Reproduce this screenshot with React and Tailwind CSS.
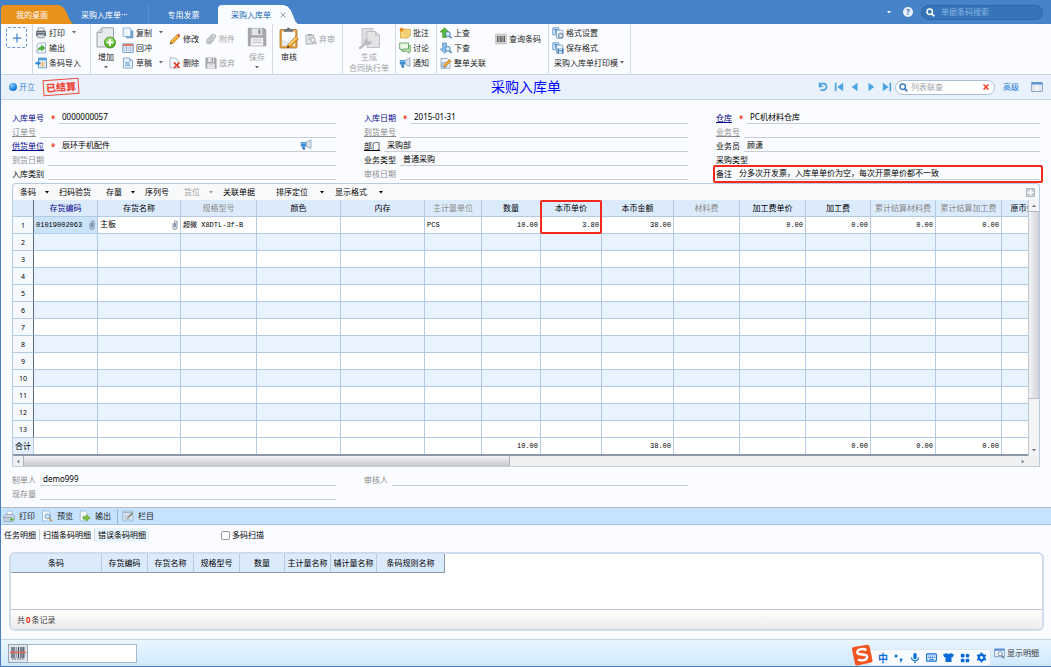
import { useState } from 'react';

const COLUMNS = [
    { key: 'code', label: '存货编码', width: 'w-[64px]', tone: 'text-[#00008b]' },
    { key: 'name', label: '存货名称', width: 'w-[83px]' },
    { key: 'spec', label: '规格型号', width: 'w-[76px]', tone: 'text-[#8a8a8a]' },
    { key: 'color', label: '颜色', width: 'w-[84px]' },
    { key: 'memory', label: '内存', width: 'w-[84px]' },
    { key: 'unit', label: '主计量单位', width: 'w-[57px]', tone: 'text-[#8a8a8a]' },
    { key: 'qty', label: '数量', width: 'w-[59px]', numeric: true },
    { key: 'price', label: '本币单价', width: 'w-[61px]', numeric: true, marked: true },
    { key: 'amount', label: '本币金额', width: 'w-[72px]', numeric: true },
    { key: 'material', label: '材料费', width: 'w-[66px]', numeric: true, tone: 'text-[#8a8a8a]' },
    { key: 'procPrice', label: '加工费单价', width: 'w-[66px]', numeric: true },
    { key: 'proc', label: '加工费', width: 'w-[65px]', numeric: true },
    { key: 'sumMaterial', label: '累计结算材料费', width: 'w-[65px]', numeric: true, tone: 'text-[#8a8a8a]' },
    { key: 'sumProc', label: '累计结算加工费', width: 'w-[66px]', numeric: true, tone: 'text-[#8a8a8a]' },
    { key: 'origin', label: '原币金额', width: 'w-[50px]', numeric: true },
];

const FIRST_ROW = {
    code: '01019002063',
    name: '主板',
    spec: '超微 X8DTL-3f-B',
    unit: 'PCS',
    qty: '10.00',
    price: '3.80',
    amount: '38.00',
    procPrice: '0.00',
    proc: '0.00',
    sumMaterial: '0.00',
    sumProc: '0.00',
};

const ROWS = Array.from({ length: 13 }, (_, i) => (i === 0 ? FIRST_ROW : {}));

const TOTALS = { qty: '10.00', amount: '38.00', proc: '0.00', sumMaterial: '0.00', sumProc: '0.00' };

const FIELDS = [
    [
        { id: 'no', label: '入库单号', tone: 'text-[#00008b]', required: true, value: '0000000057' },
        { id: 'order', label: '订单号', tone: 'text-[#8a8a8a] underline', value: '' },
        { id: 'vendor', label: '供货单位', tone: 'text-[#00008b] underline', required: true, value: '辰环手机配件', horn: true },
        { id: 'arrive', label: '到货日期', tone: 'text-[#8a8a8a]', value: '' },
        { id: 'kind', label: '入库类别', tone: 'text-black', value: '' },
    ],
    [
        { id: 'date', label: '入库日期', tone: 'text-[#00008b]', required: true, value: '2015-01-31' },
        { id: 'arriveNo', label: '到货单号', tone: 'text-[#8a8a8a] underline', value: '' },
        { id: 'dept', label: '部门', tone: 'text-black underline', value: '采购部' },
        { id: 'biz', label: '业务类型', tone: 'text-black', value: '普通采购' },
        { id: 'audit', label: '审核日期', tone: 'text-[#8a8a8a]', value: '' },
    ],
    [
        { id: 'store', label: '仓库', tone: 'text-[#00008b] underline', required: true, value: 'PC机材料仓库' },
        { id: 'bizNo', label: '业务号', tone: 'text-[#8a8a8a] underline', value: '' },
        { id: 'clerk', label: '业务员', tone: 'text-black', value: '顾潇' },
        { id: 'buyType', label: '采购类型', tone: 'text-black', value: '' },
        { id: 'memo', label: '备注', tone: 'text-black', value: '分多次开发票，入库单单价为空，每次开票单价都不一致', marked: true },
    ],
];

const GRID_TOOLS = [
    { label: '条码', caret: true },
    { label: '扫码验货' },
    { label: '存量', caret: true },
    { label: '序列号' },
    { label: '货位', caret: true, disabled: true },
    { label: '关联单据' },
];

const VIEW_TOOLS = ['排序定位', '显示格式'];

const SCAN_COLUMNS = [
    { label: '条码', width: 'w-[91px]' },
    { label: '存货编码', width: 'w-[46px]' },
    { label: '存货名称', width: 'w-[46px]' },
    { label: '规格型号', width: 'w-[46px]' },
    { label: '数量', width: 'w-[45px]' },
    { label: '主计量名称', width: 'w-[46px]' },
    { label: '辅计量名称', width: 'w-[46px]' },
    { label: '条码规则名称', width: 'w-[68px]' },
];

/* ---------- icons ---------- */

function Icon({ children, className = 'size-3' }) {
    return (
        <svg viewBox="0 0 12 12" className={`shrink-0 ${className}`} fill="none" aria-hidden="true">
            {children}
        </svg>
    );
}

const Caret = ({ className = 'text-[#666]' }) => (
    <svg viewBox="0 0 4 3" className={`w-1 h-[3px] shrink-0 ${className}`} fill="currentColor" aria-hidden="true">
        <path d="M0 0h4L2 2.6z" />
    </svg>
);

const PrinterIcon = () => (
    <Icon>
        <path d="M3 1h6v3H3z" fill="#fff" stroke="#6b7280" strokeWidth=".7" />
        <path d="M1 4.500Q1 3.700 2 3.700h8q1 0 1 .8V9H1z" fill="#5f6b78" />
        <path d="M1.500 5.600h9" stroke="#a9b4c2" />
        <path d="M2.800 7.300h6.400v3.500H2.800z" fill="#eef2f6" stroke="#6b7280" strokeWidth=".7" />
        <path d="M4 9h4" stroke="#8d97a3" strokeWidth=".6" />
    </Icon>
);

const ExportIcon = () => (
    <Icon>
        <path d="M2 2.800L4 1h6.500v10H2z" fill="#f3f8fd" stroke="#8ea6bf" strokeWidth=".8" />
        <path d="M3 8.500Q3.200 5 6.300 4.900V3l3.800 3.100-3.800 3V7.200Q4.500 7 3 8.500z" fill="#4db32f" stroke="#2f8a1c" strokeWidth=".4" />
    </Icon>
);

const ImportIcon = () => (
    <Icon>
        <path d="M3.500 1h8v9.800h-8z" fill="#eaf4fd" stroke="#4486c4" strokeWidth=".8" />
        <path d="M3.500 1.300h8v2h-8z" fill="#4a98dc" />
        <path d="M5 5.300h5.500M5 7h5.500M5 8.700h5.500M7.500 4v6.500" stroke="#e0a54a" strokeWidth=".6" />
        <path d="M.3 5.200h2.500V3.600L6 6.200 2.800 8.800V7.200H.3z" fill="#2f86d1" />
    </Icon>
);

const CopyIcon = () => (
    <Icon>
        <path d="M4 3.500h7.300v7.800H4z" fill="#6f9fce" />
        <path d="M1.200 1h7.500v8.500H1.200z" fill="#eef6fe" stroke="#7ba4cd" strokeWidth=".8" />
    </Icon>
);

const FlushIcon = () => (
    <Icon>
        <path d="M.7 1.800h10.600v8.700H.7z" fill="#dbe9f8" stroke="#6d93bd" strokeWidth=".8" />
        <path d="M1 2.200h10v1.800H1z" fill="#e2705f" />
        <path d="M1 6h10M1 8.200h10M4.500 4v6.300M8 4v6.300" stroke="#9db9d8" strokeWidth=".6" />
    </Icon>
);

const DraftIcon = () => (
    <Icon>
        <path d="M1.500 1h6L10.500 4v7h-9z" fill="#eaf3fd" stroke="#6f97c2" strokeWidth=".8" />
        <path d="M7.500 1v3h3" fill="#b7d2ee" stroke="#6f97c2" strokeWidth=".6" />
        <path d="M3.200 5.500h4M3.200 7h5M3.200 8.500h5" stroke="#4b86c4" strokeWidth=".7" />
    </Icon>
);

const PencilIcon = () => (
    <Icon>
        <path d="M1.800 7.800L8 1.800l2.300 2.300-6.200 6.100-2.900.9z" fill="#f6a623" stroke="#8d5a14" strokeWidth=".5" />
        <path d="M2.600 8.500l6.200-6" stroke="#ffd98a" strokeWidth=".9" />
        <path d="M8 1.800l1-.9q.8-.3 1.600.5t.5 1.700l-.8 1z" fill="#d9573f" />
        <path d="M1.200 11.100l.4-1.900 1.400 1.400z" fill="#333" />
    </Icon>
);

const DeleteIcon = () => (
    <Icon>
        <path d="M1 1h5.500L9 3.500V11H1z" fill="#f4f7fa" stroke="#8b9bad" strokeWidth=".7" />
        <path d="M5 5.500l5.500 5.500M10.500 5.500L5 11" stroke="#df3320" strokeWidth="1.700" />
    </Icon>
);

const ClipIcon = () => (
    <Icon>
        <path d="M8.300 3.300L4.200 7.600q-.6 1 .2 1.400t1.300-.3l4.200-4.200q1-1.400-.1-2.500t-2.500-.1L2.400 6.700Q1 8.600 2.300 9.900t3.100.2l3-2.900" stroke="#b5b8bc" strokeWidth="1.500" />
    </Icon>
);

// The upright clip shown at the end of a reference cell
const CellClip = () => (
    <svg viewBox="0 0 6 10" className="w-[6px] h-[10px] shrink-0" fill="none" aria-hidden="true">
        <path d="M1 3.200v4.300q0 1.900 2 1.900t2-1.900V2.200Q5 .7 3.700.7T2.400 2.200v4.500q0 .6.600.6t.600-.6V3" stroke="#6f7f92" strokeWidth=".9" />
    </svg>
);

const GrayDiskIcon = ({ className }) => (
    <Icon className={className}>
        <path d="M.8.8h9.500l1 1v9.500H.8z" fill="#a6a8ac" stroke="#8d8f93" strokeWidth=".4" />
        <path d="M2.800.9h6.300v4H2.800z" fill="#e4e5e7" />
        <path d="M6.800 1.400h1.300v2.800H6.800z" fill="#8d8f93" />
        <path d="M2.300 6.500h7.400v4.700H2.300z" fill="#f1f1f2" />
        <path d="M3.200 7.800h5.600M3.200 9.300h5.600" stroke="#b5b7ba" strokeWidth=".5" />
    </Icon>
);

const AddDocIcon = () => (
    <svg viewBox="0 0 20 22" className="w-5 h-[22px]" fill="none" aria-hidden="true">
        <path d="M1 5.500L6 .8h11.500V20H1z" fill="#e9ecee" stroke="#98a0a8" />
        <path d="M1 5.500h5V.8" fill="#d3d8dd" stroke="#98a0a8" strokeWidth=".8" />
        <circle cx="14" cy="15.500" r="5.500" fill="#5cb82c" stroke="#3c8d16" strokeWidth=".8" />
        <path d="M9.500 14.500q1-4 4.500-4t4.500 4z" fill="#95da66" />
        <path d="M14 12v7M10.500 15.500h7" stroke="#fff" strokeWidth="2" />
    </svg>
);

const AuditIcon = () => (
    <svg viewBox="0 0 20 22" className="w-5 h-[22px]" fill="none" aria-hidden="true">
        <rect x="1" y="2.500" width="17" height="18.500" rx="1" fill="#e5a64d" stroke="#a8712a" strokeWidth=".8" />
        <path d="M3 4.500h13v14.500H3z" fill="#fbfcfd" />
        <path d="M5 4.800V3q0-.8 1-.8h1.500Q8 .5 9.500.5T11.500 2.200H13q1 0 1 .8v1.800z" fill="#6d757e" />
        <path d="M3 12l13 7H3z" fill="#e3e7eb" />
        <path d="M9 17.500l7.500-8 2.800 2.600-7.500 7.600-3.600 1z" fill="#f6a623" stroke="#8d5a14" strokeWidth=".6" />
        <path d="M10 18l7.500-7.500" stroke="#ffdc94" strokeWidth="1.100" />
        <path d="M8.200 20.700l.6-2.100 1.500 1.500z" fill="#222" />
    </svg>
);

const UnauditIcon = () => (
    <Icon>
        <path d="M1 2h7.500v9H1z" fill="#e6e7e9" stroke="#a5a8ac" strokeWidth=".9" />
        <path d="M3 1h3.500v1.800H3z" fill="#a5a8ac" />
        <path d="M3 4.800h3.500M3 6.500h2" stroke="#a5a8ac" strokeWidth=".7" />
        <circle cx="8" cy="7" r="2.300" fill="#f2f2f3" stroke="#a5a8ac" />
        <path d="M9.500 8.700L11.500 11" stroke="#a5a8ac" strokeWidth="1.300" />
    </Icon>
);

const GenerateIcon = () => (
    <svg viewBox="0 0 24 24" className="size-6" fill="none" aria-hidden="true">
        <path d="M5 1.500h11V17H5z" fill="#dcdddf" stroke="#c3c5c8" />
        <path d="M10 4.500h8.500L22.500 8v12.500H10z" fill="#e3e4e6" stroke="#bfc1c4" />
        <path d="M18.500 4.500V8h4" stroke="#bfc1c4" fill="#cfd1d3" />
        <path d="M3 21l5.500-4.500" stroke="#b9bbbe" strokeWidth="2.400" strokeLinecap="round" />
        <path d="M7.500 16q-1-3.500 2.500-5l.3 2.600 2 1.200 2.200-1.300q.6 4-3.400 4.400z" fill="#b9bbbe" />
    </svg>
);

const NoteIcon = () => (
    <Icon>
        <path d="M1.500 2.300h9.800v6l-2.600 2.700H1.500z" fill="#f7d77c" stroke="#c89a3a" strokeWidth=".7" />
        <path d="M11.300 8.300H8.700V11z" fill="#fff1c4" stroke="#c89a3a" strokeWidth=".5" />
        <circle cx="2.600" cy="2.800" r="2" fill="#ee8a1d" />
        <path d="M4.500 5h4.800M4 7h4" stroke="#d8ac4f" strokeWidth=".6" />
    </Icon>
);

const ChatIcon = () => (
    <Icon>
        <path d="M3.500 3.500h8v6H10v2L8 9.500H3.500z" fill="#bfe0b4" stroke="#5b9f55" strokeWidth=".7" />
        <path d="M.7 1h8.800v6H4.200L2.300 9V7H.7z" fill="#e9f7e4" stroke="#4f9a53" strokeWidth=".8" />
    </Icon>
);

const HornIcon = () => (
    <Icon>
        <path d="M.8 3h5.500v4.500H.8z" fill="#3f8fd8" />
        <path d="M6.300 3L11 .9v8.600L6.300 7.500z" fill="#d8e3ee" stroke="#7e95ad" strokeWidth=".7" />
        <path d="M2 7.500h2.600l.6 3.300H3z" fill="#2f74b8" />
        <path d="M1 4.200h5" stroke="#9acbf3" strokeWidth=".8" />
    </Icon>
);

const LookUpIcon = () => (
    <Icon>
        <path d="M4.500.7L9 5H6.400v5.500H2.600V5H0z" fill="#5bb834" stroke="#2f8420" strokeWidth=".5" />
        <circle cx="7.800" cy="7" r="2.400" fill="#d6ebfc" stroke="#3b7cc0" strokeWidth=".9" />
        <path d="M9.500 8.900l2 2.300" stroke="#3b6fa8" strokeWidth="1.300" />
    </Icon>
);

const LookDownIcon = () => (
    <Icon>
        <path d="M4.500 11.200L.3 7h2.300V1h3.800v6H9z" fill="#8fc0ec" stroke="#3777b9" strokeWidth=".6" />
        <circle cx="7.800" cy="6.800" r="2.400" fill="#d6ebfc" stroke="#3b7cc0" strokeWidth=".9" />
        <path d="M9.500 8.700l2 2.300" stroke="#3b6fa8" strokeWidth="1.300" />
    </Icon>
);

const LinkDocIcon = () => (
    <Icon>
        <path d="M1 1.500h6.500L10 4v7.300H1z" fill="#eef3f8" stroke="#7b93ac" strokeWidth=".7" />
        <circle cx="4.300" cy="8" r="2.500" stroke="#5588bd" strokeWidth=".8" />
        <path d="M4 7.500l5.500-5 1.700 1.700-5.300 5-2.300.5z" fill="#f0a42c" stroke="#8d5a14" strokeWidth=".4" />
    </Icon>
);

const BarcodeIcon = () => (
    <Icon>
        <path d="M.5 1h11v10H.5z" fill="#cfcfcf" stroke="#b5b5b5" strokeWidth=".5" />
        <path d="M2.500 3v6M4 3v6M8 3v6M9.500 3v6" stroke="#444" strokeWidth=".8" />
        <path d="M6 3v6" stroke="#444" strokeWidth="1.200" />
    </Icon>
);

const FormatIcon = ({ save }) => (
    <Icon>
        <path d="M.8.8h6v7h-6z" fill="#dcebfa" stroke="#4f86be" strokeWidth=".8" />
        <path d="M2.200 2.700h3.200M3.800 2.700v4" stroke="#2c6cad" strokeWidth=".9" />
        <path d="M4.500 3.200h6.300v8H4.500z" fill="#f1f7fd" stroke="#5f8fc0" strokeWidth=".7" />
        {save ? (
            <>
                <path d="M5.500 6.500h6v5h-6z" fill="#3f77b5" />
                <path d="M7 6.700h3v1.600H7zM7 9.300h3v2H7z" fill="#e6f0fa" />
            </>
        ) : (
            <>
                <circle cx="8.700" cy="8.700" r="2.500" fill="#b9c9da" stroke="#5b7a9b" strokeWidth=".8" />
                <circle cx="8.700" cy="8.700" r=".8" fill="#fff" />
            </>
        )}
    </Icon>
);

const SearchIcon = ({ className }) => (
    <Icon className={className}>
        <circle cx="5" cy="5" r="3.600" stroke="currentColor" strokeWidth="2" />
        <path d="M7.500 7.500L11 11" stroke="currentColor" strokeWidth="2.400" />
    </Icon>
);

const PreviewIcon = () => (
    <Icon>
        <path d="M1.500 1h5.500L9.500 3.500V11h-8z" fill="#f2f7fc" stroke="#8ca7c3" strokeWidth=".7" />
        <circle cx="6.500" cy="6.300" r="2.400" fill="#cfe6fa" stroke="#5f93c4" strokeWidth=".9" />
        <path d="M8.300 8.200l2.700 3" stroke="#c98b3c" strokeWidth="1.300" />
    </Icon>
);

const PageOutIcon = () => (
    <Icon>
        <path d="M1.200 1h5l2.500 2.500V11H1.200z" fill="#f2f7fc" stroke="#8ca7c3" strokeWidth=".7" />
        <path d="M4 6.500h3V4.700l4.300 3.200L7 11V9.200H4z" fill="#7fc144" stroke="#4d9423" strokeWidth=".5" />
    </Icon>
);

const LightPrinterIcon = () => (
    <Icon>
        <path d="M3.500 4.500L5 .9l4.500.6-1 3.500z" fill="#fff" stroke="#93a5b8" strokeWidth=".6" />
        <path d="M.7 6.500L3 4.300h7l1.300 2v4l-2 1.200H1.200z" fill="#c9d4e0" stroke="#7d8fa3" strokeWidth=".6" />
        <path d="M1 7.800h8" stroke="#8496aa" strokeWidth=".8" />
        <path d="M7 8.500h3.500v2H7z" fill="#55b43a" />
    </Icon>
);

const ColumnsIcon = () => (
    <Icon>
        <path d="M.8 1h9.900v10H.8z" fill="#dce7f2" stroke="#8ea8c4" strokeWidth=".7" />
        <path d="M1.200 2.500h9" stroke="#9db8d4" strokeWidth="1.200" />
        <path d="M2.500 5.500h3M2.500 7.500h2M2.500 9.300h6" stroke="#9aacc0" strokeWidth=".7" />
        <path d="M4.800 8.700l.6-1.800 4.700-4.300 1.100 1.200-4.700 4.300z" fill="#8b8468" />
    </Icon>
);

const ScanButtonIcon = () => (
    <svg viewBox="0 0 16 14" className="w-4 h-[14px]" fill="none" aria-hidden="true">
        <path d="M2 1v11M4 1v11M8.500 1v11M11 1v11M13.800 1v11" stroke="#3f4754" strokeWidth="1.200" />
        <path d="M6.200 1v11M12.300 1v11" stroke="#3f4754" strokeWidth=".6" />
        <path d="M2 13h12" stroke="#3f4754" strokeWidth=".9" strokeDasharray="1.500 1" />
        <path d="M0 6.500h16" stroke="#e8685f" strokeWidth="1.600" />
    </svg>
);

/* ---------- pieces ---------- */

function Tool({ icon, label, caret, disabled, roomy }) {
    return (
        <button type="button" disabled={disabled} className={`flex h-[15px] items-center whitespace-nowrap ${roomy ? 'gap-1' : 'gap-[2px]'} ${disabled ? 'text-[#a3a3a3]' : 'text-[#222]'}`}>
            {icon}
            <span>{label}</span>
            {caret && <span className="pl-[5px]"><Caret /></span>}
        </button>
    );
}

function BigTool({ icon, lines, caret, disabled }) {
    return (
        <button type="button" disabled={disabled} className={`flex flex-col items-center pt-[3px] whitespace-nowrap ${disabled ? 'text-[#a3a3a3]' : 'text-[#222]'}`}>
            <span className="flex h-6 items-start">{icon}</span>
            {lines.map((line) => (
                <span key={line} className="leading-[11px]">{line}</span>
            ))}
            {caret && <span className="pt-1"><Caret /></span>}
        </button>
    );
}

const Stack = ({ children }) => <div className="flex flex-col pt-px">{children}</div>;
const PairStack = ({ children }) => <div className="flex flex-col gap-[9px] pt-[7px]">{children}</div>;
const Group = ({ className, children }) => (
    <div className={`flex h-[50px] shrink-0 items-start border-r border-[#d3dae2] ${className}`}>{children}</div>
);

function Field({ field }) {
    const [value, setValue] = useState(field.value);
    return (
        <div className="relative flex h-[14px] items-stretch">
            <label htmlFor={field.id} className={`shrink-0 leading-[15px] ${field.tone}`}>{field.label}</label>
            {field.required && <span className="ml-[7px] w-1 shrink-0 leading-[17px] text-[#f03010] font-bold">*</span>}
            <div className="ml-1 flex min-w-0 flex-1 items-center border-b border-[#c9ced6]">
                <input
                    id={field.id}
                    value={value}
                    onChange={(e) => setValue(e.target.value)}
                    className="h-[13px] min-w-0 flex-1 bg-transparent px-[3px] text-black outline-hidden"
                />
                {field.horn && <span className="mr-6"><HornIcon /></span>}
            </div>
            {field.marked && <div className="pointer-events-none absolute -inset-x-[3px] -top-px -bottom-[3px] rounded-xs border-2 border-[#f5281e]" />}
        </div>
    );
}

function Header() {
    return (
        <header className="flex h-6 items-end bg-[#4682c8] text-white">
            <nav className="flex h-[19px] flex-1 items-stretch">
                <button type="button" className="w-[72px] rounded-tl bg-[#e8921c] pr-[10px] [clip-path:polygon(0_0,80%_0,85%_8%,89%_25%,97%_88%,100%_100%,0_100%)]">
                    我的桌面
                </button>
                <button type="button" className="w-[76px] border-r border-[#5a92d2] pl-2 text-left">采购入库单···</button>
                <button type="button" className="w-[69px]">专用发票</button>
                <div className="flex w-[80px] items-center gap-[9px] rounded-tl bg-[#f8fbff] pl-[13px] text-[#1a66b3] [clip-path:polygon(0_0,82%_0,87%_8%,91%_28%,97%_88%,100%_100%,0_100%)]">
                    <button type="button">采购入库单</button>
                    <button type="button" aria-label="关闭" className="text-[#9aa0a8]">
                        <Icon className="size-[6px]"><path d="M1 1l10 10M11 1L1 11" stroke="currentColor" strokeWidth="2" /></Icon>
                    </button>
                </div>
            </nav>
            <div className="flex h-6 items-center pr-2">
                <button type="button" aria-label="更多" className="mr-3"><Caret className="text-white" /></button>
                <button type="button" aria-label="帮助" className="mr-2 size-[10px] rounded-full bg-[#e9f1fb] text-[8px] leading-[10px] font-bold text-[#3a6fae]">?</button>
                <label className="flex h-[15px] w-[122px] items-center gap-[6px] rounded-full border border-[#2f67a8] bg-[#3674b9] pl-1">
                    <SearchIcon className="size-[9px] text-white" />
                    <input placeholder="单据条码搜索" className="w-full min-w-0 bg-transparent text-white outline-hidden placeholder:text-[#86b3e2]" />
                </label>
            </div>
        </header>
    );
}

function Ribbon() {
    return (
        <div className="flex h-[51px] border-b border-[#c5d5e5] bg-[#fafcff]">
            <Group className="w-8 pt-[3px] pl-[5px]">
                <button type="button" aria-label="添加" className="flex size-[21px] items-center justify-center rounded-xs border border-dashed border-[#6a9bd1]">
                    <Icon className="size-[10px]"><path d="M6 1v10M1 6h10" stroke="#3d86cf" strokeWidth="1.500" /></Icon>
                </button>
            </Group>
            <Group className="w-[58px] pl-[2px]">
                <Stack>
                    <Tool icon={<PrinterIcon />} label="打印" caret />
                    <Tool icon={<ExportIcon />} label="输出" />
                    <Tool icon={<ImportIcon />} label="条码导入" />
                </Stack>
            </Group>
            <Group className="w-[182px] gap-[6px] pr-[5px] pl-[5px]">
                <BigTool icon={<AddDocIcon />} lines={['增加']} caret />
                <Stack>
                    <Tool icon={<CopyIcon />} label="复制" caret />
                    <Tool icon={<FlushIcon />} label="回冲" />
                    <Tool icon={<DraftIcon />} label="草稿" caret />
                </Stack>
                <PairStack>
                    <Tool icon={<PencilIcon />} label="修改" />
                    <Tool icon={<DeleteIcon />} label="删除" />
                </PairStack>
                <PairStack>
                    <Tool icon={<ClipIcon />} label="附件" disabled />
                    <Tool icon={<GrayDiskIcon />} label="放弃" disabled />
                </PairStack>
                <div className="ml-auto">
                    <BigTool icon={<GrayDiskIcon className="size-5" />} lines={['保存']} caret disabled />
                </div>
            </Group>
            <Group className="w-[70px] gap-[6px] pl-[6px]">
                <BigTool icon={<AuditIcon />} lines={['审核']} />
                <PairStack>
                    <Tool icon={<UnauditIcon />} label="弃审" disabled />
                </PairStack>
            </Group>
            <Group className="w-[53px] justify-center">
                <BigTool icon={<GenerateIcon />} lines={['生成', '合同执行单']} disabled />
            </Group>
            <Group className="w-[41px] pl-[3px]">
                <Stack>
                    <Tool icon={<NoteIcon />} label="批注" />
                    <Tool icon={<ChatIcon />} label="讨论" />
                    <Tool icon={<HornIcon />} label="通知" />
                </Stack>
            </Group>
            <Group className="w-[112px] justify-between pr-[7px] pl-[3px]">
                <Stack>
                    <Tool icon={<LookUpIcon />} label="上查" />
                    <Tool icon={<LookDownIcon />} label="下查" />
                    <Tool icon={<LinkDocIcon />} label="整单关联" />
                </Stack>
                <PairStack>
                    <Tool icon={<BarcodeIcon />} label="查询条码" />
                </PairStack>
            </Group>
            <Group className="w-[82px] pl-[3px]">
                <Stack>
                    <Tool icon={<FormatIcon />} label="格式设置" />
                    <Tool icon={<FormatIcon save />} label="保存格式" />
                    <button type="button" className="flex h-[15px] items-center gap-[2px] pl-[2px] whitespace-nowrap text-[#222]">
                        采购入库单打印模<Caret />
                    </button>
                </Stack>
            </Group>
        </div>
    );
}

function StatusBar() {
    return (
        <div className="grid h-[25px] grid-cols-[1fr_auto_1fr] items-center border-b border-[#c5d5e5] bg-[#e9f2fc] px-2">
            <div className="flex items-center gap-[2px] text-[#3b7fc4]">
                <span className="size-2 rounded-full bg-[radial-gradient(circle_at_35%_30%,#8cc8fb,#1c7fe0_60%)]" />
                <span>开立</span>
                <span className="ml-[6px] flex h-4 w-9 -rotate-4 items-center justify-center border border-[#ee4b3c] font-['Noto_Sans_CJK_SC'] text-[10px] font-black text-[#ee4b3c]">已结算</span>
            </div>
            <h1 className="text-[14px] leading-5 text-[#0000ff]">采购入库单</h1>
            <div className="flex items-center justify-end text-[#4ba3e3]">
                <div className="flex gap-[6px]">
                    <button type="button" aria-label="刷新">
                        <Icon className="size-[10px]"><path d="M1 2h5.500q3.700.3 3.700 3.800T6.500 9.700H3" stroke="currentColor" strokeWidth="2" /><path d="M1 .5v6L6.500 6z" fill="currentColor" /></Icon>
                    </button>
                    <button type="button" aria-label="首张">
                        <Icon className="size-[10px]"><path d="M1 1h2v10H1zM11 1v10L4 6z" fill="currentColor" /></Icon>
                    </button>
                    <button type="button" aria-label="上张">
                        <Icon className="size-[10px]"><path d="M9 1v10L2 6z" fill="currentColor" /></Icon>
                    </button>
                    <button type="button" aria-label="下张">
                        <Icon className="size-[10px]"><path d="M3 1v10l7-5z" fill="currentColor" /></Icon>
                    </button>
                    <button type="button" aria-label="末张">
                        <Icon className="size-[10px]"><path d="M9 1h2v10H9zM1 1v10l7-5z" fill="currentColor" /></Icon>
                    </button>
                </div>
                <label className="ml-[3px] flex h-[15px] w-[100px] items-center gap-[3px] rounded-full border border-[#a9c0d8] bg-white pr-[5px] pl-[3px]">
                    <SearchIcon className="size-[9px] text-[#3f7fc8]" />
                    <input placeholder="列表联查" className="min-w-0 flex-1 bg-transparent text-black outline-hidden placeholder:text-[#a0a4a8]" />
                    <Icon className="size-[6px]"><path d="M1 1l10 10M11 1L1 11" stroke="#ee3a22" strokeWidth="3" /></Icon>
                </label>
                <a href="#advanced" className="ml-2 text-[#1f78d8]">高级</a>
                <button type="button" aria-label="布局" className="ml-3">
                    <Icon>
                        <path d="M.7 1.500h10.600v9H.7z" fill="#f0f3f7" stroke="#6d88ac" strokeWidth=".8" />
                        <path d="M.7 1.500h10.600v2H.7z" fill="#5592d8" />
                        <path d="M3 3.500v7M9 3.500v7" stroke="#b5c2d2" strokeWidth=".6" />
                    </Icon>
                </button>
            </div>
        </div>
    );
}

function GridCell({ column, row, first }) {
    const text = row[column.key];
    const hasClip = first && (column.key === 'code' || column.key === 'name');
    return (
        <td className={`h-[17px] overflow-hidden border-r border-b border-[#b4cae4] px-[2px] font-['Liberation_Mono','Noto_Sans_CJK_SC',monospace] text-[7px] leading-none whitespace-nowrap ${column.numeric ? 'text-right' : 'text-left'} ${hasClip && column.key === 'code' ? 'bg-[#cbe3f9]' : ''}`}>
            {hasClip ? (
                <div className="flex items-center justify-between">
                    <span className={column.key === 'name' ? 'text-[8px]' : ''}>{text}</span>
                    <CellClip />
                </div>
            ) : text}
        </td>
    );
}

function Grid() {
    return (
        <section className="mx-[11px] mt-[3px] rounded-t border border-b-0 border-[#b4cbe2] bg-[#f8f9fa]">
            <div className="flex h-4 items-center pr-1 pl-[7px] whitespace-nowrap">
                <div className="flex gap-[10px]">
                    {GRID_TOOLS.map((tool) => (
                        <button
                            key={tool.label}
                            type="button"
                            disabled={tool.disabled}
                            className={`flex items-center gap-[9px] ${tool.caret ? '' : 'pr-[5px]'} ${tool.disabled ? 'text-[#9a9a9a]' : 'text-black'}`}
                        >
                            {tool.label}
                            {tool.caret && <Caret className={tool.disabled ? 'text-[#999]' : 'text-black'} />}
                        </button>
                    ))}
                </div>
                <div className="ml-4 flex gap-[11px]">
                    {VIEW_TOOLS.map((label) => (
                        <button key={label} type="button" className="flex items-center gap-3 text-black">
                            {label}
                            <Caret className="text-black" />
                        </button>
                    ))}
                </div>
                <button type="button" aria-label="全屏" className="ml-auto">
                    <Icon className="size-[9px]">
                        <path d="M.6.6h10.800v10.800H.6z" stroke="#8e9cad" />
                        <path d="M2.500 5V2.500H5M7 2.500h2.500V5M9.500 7v2.500H7M5 9.500H2.500V7" stroke="#8e9cad" strokeWidth="1.300" />
                    </Icon>
                </button>
            </div>
            <div className="flex">
                <div className="min-w-0 flex-1 overflow-hidden border-b-2 border-[#8d99a8] bg-white">
                    <table className="w-0 table-fixed border-separate border-spacing-0">
                        <thead>
                            <tr className="bg-[#dcebfc]">
                                <th className="h-[17px] w-[21px] border-r border-b border-[#b4cae4] border-r-[#5d6b7c] p-0" aria-label="行号" />
                                {COLUMNS.map((column) => (
                                    <th key={column.key} className={`relative h-[17px] border-r border-b border-[#b4cae4] p-0 leading-none font-normal whitespace-nowrap ${column.width} ${column.tone || 'text-black'}`}>
                                        <div className="-mx-1">{column.label}</div>
                                        {column.marked && <div className="pointer-events-none absolute -inset-x-px top-0 h-[34px] rounded-xs border-2 border-[#f5281e]" />}
                                    </th>
                                ))}
                            </tr>
                        </thead>
                        <tbody>
                            {ROWS.map((row, i) => (
                                <tr key={i} className="even:bg-[#e7f4ff]">
                                    <th className="h-[17px] border-r border-b border-[#b4cae4] border-r-[#5d6b7c] bg-[#f5f9fe] p-0 text-[7px] leading-none font-normal">{i + 1}</th>
                                    {COLUMNS.map((column) => (
                                        <GridCell key={column.key} column={column} row={row} first={i === 0} />
                                    ))}
                                </tr>
                            ))}
                        </tbody>
                        <tfoot>
                            <tr>
                                <th className="h-4 border-r border-[#b4cae4] bg-[#e3effc] p-0 leading-none font-normal">合计</th>
                                {COLUMNS.map((column) => (
                                    <td key={column.key} className="h-4 border-r border-[#b4cae4] px-[2px] text-right font-['Liberation_Mono',monospace] text-[7px] leading-none">
                                        {TOTALS[column.key]}
                                    </td>
                                ))}
                            </tr>
                        </tfoot>
                    </table>
                </div>
                <div className="flex w-[11px] flex-col items-center border-l border-[#c3c8cf] bg-[#f3f4f6]">
                    <span className="flex h-[11px] items-center"><Caret className="rotate-180 text-[#66758a]" /></span>
                    <div className="w-full flex-[4] border-y border-[#b9bec6] bg-linear-to-r from-[#f2f3f5] to-[#cfd2d8]" />
                    <div className="flex-1" />
                    <span className="flex h-[11px] items-center"><Caret className="text-[#66758a]" /></span>
                </div>
            </div>
            <div className="flex h-[11px] items-center border-b border-[#c9cdd3] bg-[#eff0f2] pr-[11px]">
                <span className="flex w-[10px] justify-center"><Caret className="rotate-90 text-[#66758a]" /></span>
                <div className="h-full w-[48%] border-x border-[#aeb3bb] bg-linear-to-b from-[#f4f4f6] to-[#c6c8ce]" />
                <span className="ml-auto flex w-[10px] justify-center"><Caret className="-rotate-90 text-[#66758a]" /></span>
            </div>
        </section>
    );
}

function ScanPanel() {
    return (
        <>
            <div className="mt-[7px] flex h-[18px] items-center border-t border-b border-t-[#b9bdc3] border-b-[#a9c4de] bg-[#c5e2ff] pl-[2px]">
                <div className="flex gap-[6px] border-r border-[#9db3c9] pr-[6px] text-black">
                    <Tool icon={<LightPrinterIcon />} label="打印" roomy />
                    <Tool icon={<PreviewIcon />} label="预览" roomy />
                    <Tool icon={<PageOutIcon />} label="输出" roomy />
                </div>
                <div className="pl-1"><Tool icon={<ColumnsIcon />} label="栏目" roomy /></div>
            </div>
            <div className="mb-[7px] flex h-5 items-center pl-[3px] text-black">
                <button type="button" className="border-r border-[#cfd5db] pr-[3px]">任务明细</button>
                <button type="button" className="border-r border-[#cfd5db] px-[3px]">扫描条码明细</button>
                <button type="button" className="bg-[#e9f5ff] px-[3px] py-px">错误条码明细</button>
                <label className="ml-[72px] flex items-center gap-[2px]">
                    <input type="checkbox" className="size-[9px] appearance-none rounded-xs border border-[#9a9a9a] bg-white checked:bg-[#3c86d0]" />
                    多码扫描
                </label>
            </div>
            <section className="mr-[7px] ml-2 flex flex-1 flex-col overflow-hidden rounded-md border-2 border-[#cddbec] bg-white">
                <div className="min-h-[55px] flex-1">
                    <table className="w-0 table-fixed border-separate border-spacing-0">
                        <thead>
                            <tr className="bg-[#dcebfc]">
                                {SCAN_COLUMNS.map((column) => (
                                    <th key={column.label} className={`h-[19px] border-r border-b border-[#b4cae4] border-b-[#8d99a8] p-0 leading-none font-normal whitespace-nowrap text-black last:border-r-[#8d99a8] ${column.width}`}>
                                        {column.label}
                                    </th>
                                ))}
                            </tr>
                        </thead>
                    </table>
                </div>
                <footer className="h-5 border-t border-[#bcc6d2] bg-linear-to-b from-white to-[#ececec] pl-[6px] leading-[19px] text-[#444]">
                    共<b className="px-px font-bold text-[#f03010]">0</b>条记录
                </footer>
            </section>
        </>
    );
}

function ImeBar() {
    return (
        <div className="flex items-end text-[#0a6cdb]">
            <svg viewBox="0 0 22 22" className="relative z-10 -mr-1 size-[22px]" aria-hidden="true">
                <path d="M1 5.500Q.6 3.500 2.500 3L16 .7q2-.3 2.500 1.600L21.500 16q.3 2-1.500 2.500L6.500 21.500q-2 .3-2.500-1.600z" fill="#f2551f" />
                <path d="M15.500 6q-3-1.500-6.500-.6-3.500 1.200-2.500 3.600.8 1.300 5 1.500 4.500.2 4.700 2.500-.1 2.500-3.700 3.200-3 .6-5.500-.7" stroke="#fff" strokeWidth="2.400" fill="none" />
            </svg>
            <div className="flex h-[17px] items-center gap-[6px] rounded-xs border border-[#dbe6f1] bg-[#f7fbff] pr-[3px] pl-2">
                <span className="text-[10px] leading-none font-bold">中</span>
                <Icon className="size-[10px]"><circle cx="2.500" cy="3.500" r="1.800" fill="currentColor" /><path d="M7 6.500h3v2.300L8 11.500H7l1-2.500H7z" fill="currentColor" /></Icon>
                <Icon className="size-[10px]"><rect x="4" y="0" width="4" height="7.500" rx="2" fill="currentColor" /><path d="M1.800 5.500Q2 9.300 6 9.300t4.200-3.800M6 9v3" stroke="currentColor" strokeWidth="1.400" /></Icon>
                <Icon className="size-[11px]"><rect x=".7" y="2" width="10.600" height="8" rx="1" stroke="currentColor" strokeWidth="1.300" /><path d="M2.500 4.300h7M2.500 6.100h7" stroke="currentColor" strokeDasharray="1.200 .7" strokeWidth="1.200" /><path d="M3.500 8.100h5" stroke="currentColor" /></Icon>
                <Icon className="size-[11px]"><path d="M3.500 1Q6 3.500 8.500 1L12 3l-1.500 3-1.200-.5V11H2.700V5.500L1.500 6 0 3z" fill="currentColor" /></Icon>
                <Icon className="size-[10px]"><rect x="1" y="1" width="4.300" height="4.300" rx="1" fill="currentColor" /><circle cx="9" cy="3.200" r="2.300" fill="currentColor" /><rect x="1" y="6.800" width="4.300" height="4.300" rx="1" fill="currentColor" /><rect x="6.800" y="6.800" width="4.300" height="4.300" rx="1" fill="currentColor" /></Icon>
                <Icon className="size-[11px]"><circle cx="6" cy="6" r="3" stroke="currentColor" strokeWidth="2.600" /><path d="M6 .5v2.500M6 9.500v2M1.200 3.300l2 1M9 7.700l1.800 1M1.200 8.700L3 7.700M9 4.300l1.800-1" stroke="currentColor" strokeWidth="2" /></Icon>
            </div>
        </div>
    );
}

function BottomBar() {
    return (
        <div className="mt-2 flex h-[27px] items-center border-t border-[#c3d3e2] bg-linear-to-b from-[#eaf6ff] to-[#cfe9fd] pr-3 pl-[7px]">
            <button type="button" aria-label="扫描条码" className="flex h-[19px] w-5 items-center justify-center border border-[#9aa5b3] bg-[#dfe6ef]">
                <ScanButtonIcon />
            </button>
            <input aria-label="条码" className="h-[19px] w-[109px] border border-l-0 border-[#a9b8c8] bg-white px-1 outline-hidden" />
            <div className="ml-auto flex h-full items-end gap-[3px]">
                <ImeBar />
                <button type="button" className="flex h-full items-center gap-[2px] text-[#333]">
                    <Icon className="size-[11px]">
                        <path d="M.7 1h10.600v8.500H.7z" fill="#eef5fc" stroke="#5c84b4" strokeWidth=".8" />
                        <path d="M.7 1h10.600v2H.7z" fill="#5592d8" />
                        <circle cx="6.800" cy="6.300" r="2.200" fill="#fff" stroke="#5c7896" strokeWidth=".9" />
                        <path d="M8.300 8L11 11.300" stroke="#5c7896" strokeWidth="1.300" />
                    </Icon>
                    显示明细
                </button>
            </div>
        </div>
    );
}

export default function App() {
    return (
        <div className="flex min-h-screen flex-col overflow-hidden border-b border-l border-[#4a7fc1] bg-[#fbfcff] font-['Noto_Sans','Noto_Sans_CJK_SC',sans-serif] text-[8px] leading-3">
            <Header />
            <Ribbon />
            <StatusBar />
            <div className="grid grid-cols-3 gap-7 px-[11px] pt-[10px]">
                {FIELDS.map((fields, i) => (
                    <div key={i}>
                        {fields.map((field) => <Field key={field.id} field={field} />)}
                    </div>
                ))}
            </div>
            <Grid />
            <div className="grid grid-cols-3 gap-x-7 px-[11px] pt-[5px]">
                <div>
                    <Field field={{ id: 'maker', label: '制单人', tone: 'text-[#8a8a8a]', value: 'demo999' }} />
                    <Field field={{ id: 'stock', label: '现存量', tone: 'text-[#8a8a8a]', value: '' }} />
                </div>
                <Field field={{ id: 'auditor', label: '审核人', tone: 'text-[#8a8a8a]', value: '' }} />
            </div>
            <ScanPanel />
            <BottomBar />
        </div>
    );
}
